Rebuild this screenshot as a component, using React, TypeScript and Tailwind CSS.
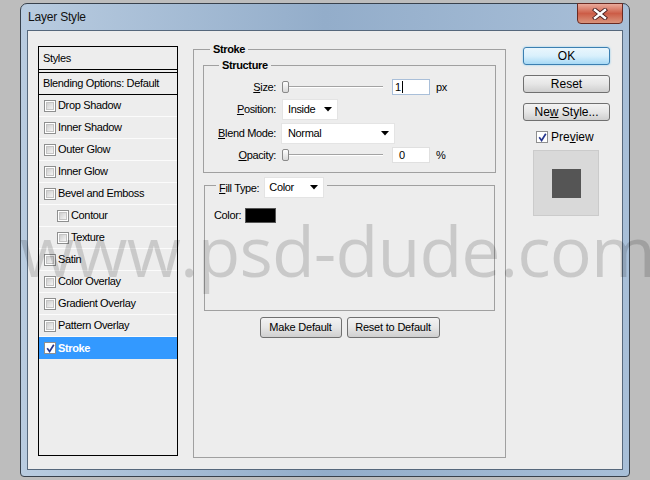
import React from "react";

const Check = ({ checked }: { checked?: boolean }) =>
  checked ? (
    <span className="w-[12px] h-[12px] border border-[#8e8f8f] bg-white flex items-center justify-center shrink-0">
      <svg width="9" height="9" viewBox="0 0 9 9">
        <path d="M1.2 4.2 L3.6 7.4 L7.8 0.8" stroke="#26368e" strokeWidth="1.7" fill="none" />
      </svg>
    </span>
  ) : (
    <span className="w-[12px] h-[12px] border border-[#8e8f8f] bg-white p-[1px] flex shrink-0">
      <span className="flex-1 bg-gradient-to-br from-[#cfcfcf] to-[#f4f4f4] border border-[#c4c4c4]" />
    </span>
  );

const Arrow = () => (
  <svg width="8" height="5" viewBox="0 0 8 5">
    <path d="M0 0 L8 0 L4 4.5 Z" fill="#000" />
  </svg>
);

const Slider = () => (
  <div className="w-[101px] h-[14px] flex items-center">
    <div className="w-[7px] h-[12px] rounded-[2px] border border-[#8a8a8a] bg-gradient-to-b from-white to-[#d9d9d9] shrink-0" />
    <div className="flex-1 h-[2px] border-t border-[#a3a3a3] border-b border-b-white" />
  </div>
);

const Btn = ({ children, className }: { children: React.ReactNode; className: string }) => (
  <div
    className={
      "h-[21px] rounded-[3px] border border-[#707070] bg-gradient-to-b from-[#f3f3f3] via-[#e6e6e6] to-[#cfcfcf] flex items-center justify-center text-[11px] tracking-[-0.2px] " +
      className
    }
  >
    {children}
  </div>
);

const rows: [string, boolean][] = [
  ["Drop Shadow", false],
  ["Inner Shadow", false],
  ["Outer Glow", false],
  ["Inner Glow", false],
  ["Bevel and Emboss", false],
  ["Contour", true],
  ["Texture", true],
  ["Satin", false],
  ["Color Overlay", false],
  ["Gradient Overlay", false],
  ["Pattern Overlay", false],
];

export default function App() {
  return (
    <div className="w-[650px] h-[480px] bg-[#bdbdbd] relative overflow-hidden font-['Liberation_Sans',Arial,sans-serif] text-[11px] text-black pl-[20px] pt-[3px]">
      <div className="w-[610px] h-[474px] border border-[#38414c] rounded-t-[7px] rounded-b-[4px] bg-gradient-to-r from-[#b9cce0] via-[#93adca] to-[#a8bfd8] flex flex-col px-[6px] pb-[6px]">
        {/* title bar */}
        <div className="h-[26px] flex items-start justify-between shrink-0">
          <div className="pl-[1px] h-[26px] flex items-center text-[12px] tracking-[-0.2px] text-[#111]">Layer Style</div>
          <div className="-mt-[1px] w-[46px] h-[21px] rounded-b-[4px] border border-[#6a2a22] bg-gradient-to-b from-[#e9aa9b] via-[#cc5d47] to-[#d9937c] flex items-center justify-center">
            <svg width="16" height="12" viewBox="0 0 16 12">
              <path d="M3 2 L13 10 M13 2 L3 10" stroke="#4a2020" strokeWidth="4.2" strokeLinecap="square" />
              <path d="M3 2 L13 10 M13 2 L3 10" stroke="#ffffff" strokeWidth="2.4" strokeLinecap="square" />
            </svg>
          </div>
        </div>
        {/* client area */}
        <div className="flex-1 border border-[#56687c] bg-[#ededed] flex items-start pl-[10px] pt-[12px]">
          {/* left styles panel */}
          <div className="mt-[3px] w-[140px] h-[410px] border border-black flex flex-col tracking-[-0.35px]">
            <div className="h-[23px] shrink-0 border-b border-black pl-[4px] flex items-center">Styles</div>
            <div className="h-[2px] shrink-0" />
            <div className="h-[23px] shrink-0 border-y border-black pl-[4px] flex items-center">Blending Options: Default</div>
            {rows.map(([name, indent]) => (
              <div
                key={name}
                className={
                  indent
                    ? "h-[22px] shrink-0 border-b border-[#fbfbfb] pl-[18px] flex items-center gap-[2px]"
                    : "h-[22px] shrink-0 border-b border-[#fbfbfb] pl-[5px] flex items-center gap-[2px]"
                }
              >
                <Check />
                <span>{name}</span>
              </div>
            ))}
            <div className="h-[22px] shrink-0 bg-[#3399ff] text-white font-bold pl-[5px] flex items-center gap-[2px]">
              <Check checked />
              <span>Stroke</span>
            </div>
          </div>

          {/* Stroke group */}
          <fieldset className="ml-[15px] w-[313px] h-[415px] border border-[#a0a0a0] px-[9px] flex flex-col tracking-[-0.35px]">
            <legend className="ml-[7px] px-[3px] h-[13px] leading-[13px] font-bold">Stroke</legend>
            <fieldset className="mt-[3px] w-[293px] border border-[#a0a0a0] pb-[9px] flex flex-col">
              <legend className="ml-[15px] px-[3px] h-[13px] leading-[13px] font-bold">Structure</legend>
              <div className="mt-[7px] h-[16px] flex items-center">
                <div className="w-[72px] text-right">
                  <span className="underline">S</span>ize:
                </div>
                <div className="ml-[6px]">
                  <Slider />
                </div>
                <div className="ml-[9px] w-[38px] h-[16px] bg-white border border-[#a9bfd9] flex items-center pl-[2px]">
                  <span>1</span>
                  <span className="w-[1px] h-[12px] bg-black ml-[1px]" />
                </div>
                <span className="ml-[6px]">px</span>
              </div>
              <div className="mt-[4px] h-[21px] flex items-center">
                <div className="w-[72px] text-right">
                  <span className="underline">P</span>osition:
                </div>
                <div className="ml-[6px] w-[56px] h-[21px] bg-white border border-[#e4e4e4] flex items-center justify-between pl-[5px] pr-[5px]">
                  <span>Inside</span>
                  <Arrow />
                </div>
              </div>
              <div className="mt-[3px] h-[21px] flex items-center">
                <div className="w-[72px] text-right">
                  <span className="underline">B</span>lend Mode:
                </div>
                <div className="ml-[5px] w-[114px] h-[21px] bg-white border border-[#e4e4e4] flex items-center justify-between pl-[6px] pr-[5px]">
                  <span>Normal</span>
                  <Arrow />
                </div>
              </div>
              <div className="mt-[3px] h-[16px] flex items-center">
                <div className="w-[72px] text-right">
                  <span className="underline">O</span>pacity:
                </div>
                <div className="ml-[6px]">
                  <Slider />
                </div>
                <div className="ml-[9px] w-[38px] h-[16px] bg-white border border-[#e0e0e0] flex items-center pl-[6px]">
                  <span>0</span>
                </div>
                <span className="ml-[6px]">%</span>
              </div>
            </fieldset>

            <fieldset className="mt-[4px] mx-[1px] h-[134px] border border-[#a0a0a0] flex flex-col">
              <legend className="ml-[11px] px-[3px] h-[17px] flex items-start">
                <span className="mt-[3px]">
                  <span className="underline">F</span>ill Type:
                </span>
                <div className="ml-[5px] w-[60px] h-[21px] bg-white border border-[#e4e4e4] flex items-center justify-between pl-[4px] pr-[5px] shrink-0">
                  <span>Color</span>
                  <Arrow />
                </div>
              </legend>
              <div className="mt-[14px] pl-[9px] h-[15px] flex items-center">
                <span>Color:</span>
                <div className="ml-[4px] w-[31px] h-[15px] bg-black border border-[#555]" />
              </div>
            </fieldset>

            <div className="mt-[6px] flex justify-center gap-[5px]">
              <Btn className="w-[82px]">Make Default</Btn>
              <Btn className="w-[93px]">Reset to Default</Btn>
            </div>
          </fieldset>

          {/* right column */}
          <div className="ml-[17px] mt-[4px] w-[87px] flex flex-col text-[12px]">
            <div className="h-[18px] rounded-[3px] border border-[#3c7fb1] bg-gradient-to-b from-[#eaf6fd] via-[#d9f0fc] to-[#a7d9f5] shadow-[0_0_2px_#7ec8f0] flex items-center justify-center">
              OK
            </div>
            <div className="mt-[10px] h-[18px] rounded-[3px] border border-[#707070] bg-gradient-to-b from-[#f3f3f3] via-[#e6e6e6] to-[#cfcfcf] flex items-center justify-center">
              Reset
            </div>
            <div className="mt-[10px] h-[18px] rounded-[3px] border border-[#707070] bg-gradient-to-b from-[#f3f3f3] via-[#e6e6e6] to-[#cfcfcf] flex items-center justify-center">
              <span>
                Ne<span className="underline">w</span> Style...
              </span>
            </div>
            <div className="mt-[10px] h-[12px] pl-[13px] flex items-center gap-[3px]">
              <Check checked />
              <span>
                Pre<span className="underline">v</span>iew
              </span>
            </div>
            <div className="mt-[7px] ml-[10px] w-[66px] h-[66px] bg-[#d9d9d9] border border-[#cbcbcb] flex items-center justify-center">
              <div className="w-[29px] h-[29px] bg-[#555555]" />
            </div>
          </div>
        </div>
      </div>

      {/* watermark overlay */}
      <div className="absolute left-[20px] top-[215px] pointer-events-none font-['Open_Sans',sans-serif] text-[70px] leading-none text-black/15 whitespace-nowrap tracking-[-0.9px]">
        www.psd-dude.com
      </div>
    </div>
  );
}
